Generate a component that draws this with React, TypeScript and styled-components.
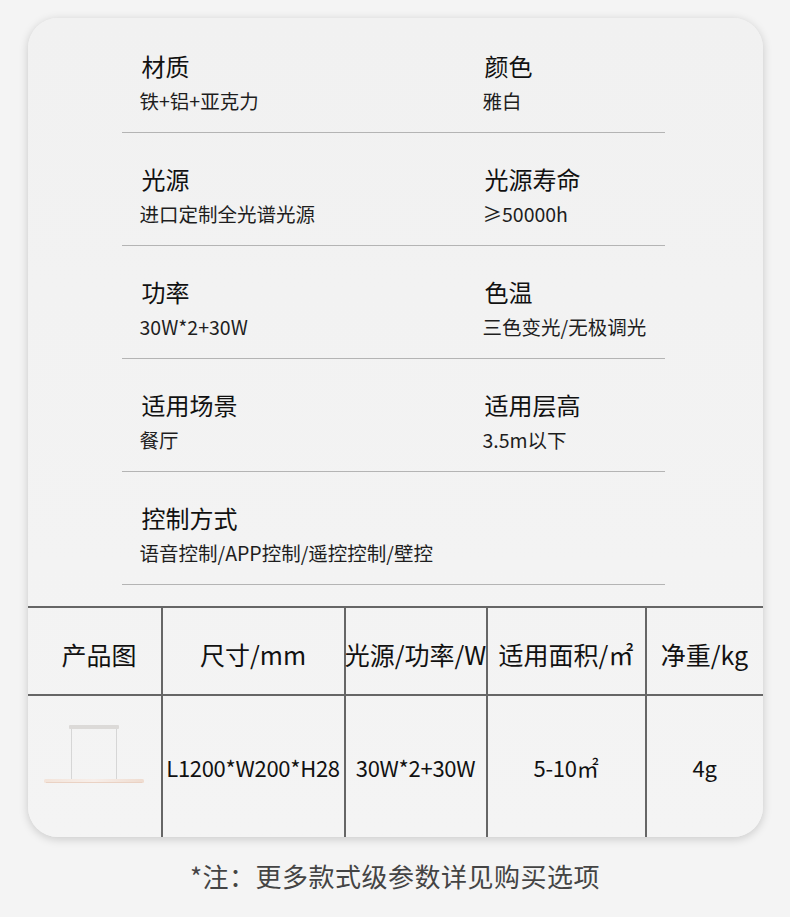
import styled, { createGlobalStyle } from "styled-components"

const specs = [
    [
        { title: "材质", value: "铁+铝+亚克力" },
        { title: "颜色", value: "雅白" },
    ],
    [
        { title: "光源", value: "进口定制全光谱光源" },
        { title: "光源寿命", value: "≥50000h" },
    ],
    [
        { title: "功率", value: "30W*2+30W" },
        { title: "色温", value: "三色变光/无极调光" },
    ],
    [
        { title: "适用场景", value: "餐厅" },
        { title: "适用层高", value: "3.5m以下" },
    ],
    [{ title: "控制方式", value: "语音控制/APP控制/遥控控制/壁控" }],
]

const columns = [
    { head: "产品图", width: 133 },
    { head: "尺寸/mm", width: 183 },
    { head: "光源/功率/W", width: 142 },
    { head: "适用面积/㎡", width: 159 },
    { head: "净重/kg", width: 118 },
]

const cells = ["L1200*W200*H28", "30W*2+30W", "5-10㎡", "4g"]

function Lamp() {
    return (
        <LampPic width="100" height="62" viewBox="0 0 100 62">
            <defs>
                <linearGradient id="bar" x1="0" x2="1" y1="0" y2="0">
                    <stop offset="0" stopColor="#f3e4da" />
                    <stop offset="0.5" stopColor="#f7eee9" />
                    <stop offset="1" stopColor="#efdcd0" />
                </linearGradient>
            </defs>
            <rect x="25" y="1" width="50" height="4" rx="1" fill="#dcdad8" />
            <line x1="27.5" y1="5" x2="27.5" y2="56" stroke="#d6d6d6" strokeWidth="1" />
            <line x1="72.5" y1="5" x2="72.5" y2="56" stroke="#d6d6d6" strokeWidth="1" />
            <rect x="0" y="55" width="100" height="4" rx="1.5" fill="url(#bar)" />
            <rect x="2" y="58" width="96" height="1" fill="#ead2c4" />
        </LampPic>
    )
}

export default function App() {
    return (
        <>
            <GlobalStyle />
            <Page>
                <Card>
                    <SpecList>
                        {specs.map((row, i) => (
                            <SpecRow key={i}>
                                {row.map((s) => (
                                    <Spec key={s.title}>
                                        <SpecTitle>{s.title}</SpecTitle>
                                        <SpecValue>{s.value}</SpecValue>
                                    </Spec>
                                ))}
                            </SpecRow>
                        ))}
                    </SpecList>
                    <Table>
                        <HeadRow>
                            {columns.map((c) => (
                                <HeadCell key={c.head} $w={c.width}>
                                    {c.head}
                                </HeadCell>
                            ))}
                        </HeadRow>
                        <BodyRow>
                            <BodyCell $w={columns[0].width}>
                                <Lamp />
                            </BodyCell>
                            {cells.map((t, i) => (
                                <BodyCell key={t} $w={columns[i + 1].width}>
                                    {t}
                                </BodyCell>
                            ))}
                        </BodyRow>
                    </Table>
                </Card>
                <Note>*注：更多款式级参数详见购买选项</Note>
            </Page>
        </>
    )
}

const GlobalStyle = createGlobalStyle`
    html, body {
        margin: 0;
        padding: 0;
        background: #f4f4f4;
    }
    body {
        font-family: "Noto Sans CJK SC", "Noto Sans", sans-serif;
        color: #111;
    }
`

const Page = styled.div`
    width: 790px;
    height: 917px;
    padding-top: 18px;
    box-sizing: border-box;
    display: flex;
    flex-direction: column;
    align-items: center;
`

const Card = styled.div`
    width: 735px;
    height: 819px;
    border-radius: 30px;
    overflow: hidden;
    background: linear-gradient(#f1f1f1, #f4f4f4);
    box-shadow: 0 2px 10px rgba(0, 0, 0, 0.18);
    display: flex;
    flex-direction: column;
`

const SpecList = styled.div`
    margin-left: 94px;
    width: 543px;
    padding-top: 2px;
`

const SpecRow = styled.div`
    display: grid;
    grid-template-columns: 343px 1fr;
    padding: 30px 0 18px 20px;
    border-bottom: 1px solid #b4b4b4;
    height: 64px;
`

const Spec = styled.div`
    display: flex;
    flex-direction: column;
    gap: 6px;
    white-space: nowrap;
`

const SpecTitle = styled.div`
    font-size: 24px;
    line-height: 32px;
    color: #111;
`

const SpecValue = styled.div`
    font-size: 19.5px;
    line-height: 26px;
    color: #1e1e1e;
    margin-left: -2px;
`

const Table = styled.div`
    margin-top: 21px;
    border-top: 2px solid #666;
    display: flex;
    flex-direction: column;
    flex: 1;
`

const HeadRow = styled.div`
    display: flex;
    height: 86px;
    border-bottom: 2px solid #666;
`

const BodyRow = styled.div`
    display: flex;
    flex: 1;
`

const HeadCell = styled.div<{ $w: number }>`
    width: ${(p) => p.$w}px;
    flex: none;
    box-sizing: border-box;
    display: flex;
    align-items: center;
    justify-content: center;
    padding-top: 6px;
    font-size: 25px;
    color: #111;
    white-space: nowrap;
    &:first-child {
        padding-left: 10px;
    }
    & + & {
        border-left: 2px solid #666;
    }
`

const BodyCell = styled(HeadCell)`
    font-size: 22px;
    padding-top: 0;
    letter-spacing: -0.3px;
    &:first-child {
        padding-left: 0;
    }
`

const LampPic = styled.svg`
    margin-bottom: 24px;
`

const Note = styled.div`
    margin-top: 22px;
    font-size: 26px;
    line-height: 34px;
    color: #444;
    letter-spacing: 0.5px;
`
